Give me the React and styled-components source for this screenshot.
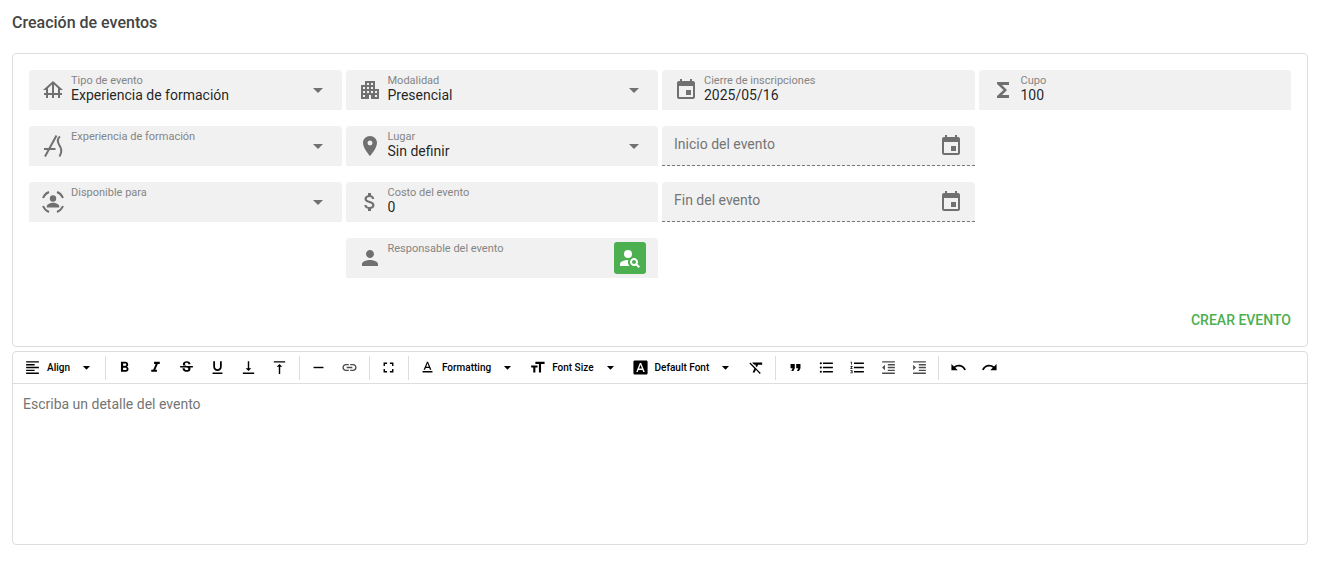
import styled, { createGlobalStyle } from 'styled-components';
import {
	MdApartment,
	MdArrowDropDown,
	MdAttachMoney,
	MdEvent,
	MdFontDownload,
	MdFormatAlignLeft,
	MdFormatBold,
	MdFormatClear,
	MdFormatIndentDecrease,
	MdFormatIndentIncrease,
	MdFormatItalic,
	MdFormatListBulleted,
	MdFormatListNumbered,
	MdFormatQuote,
	MdFormatSize,
	MdFormatUnderlined,
	MdFoundation,
	MdFullscreen,
	MdFunctions,
	MdLink,
	MdPerson,
	MdPersonSearch,
	MdPlace,
	MdRedo,
	MdRemove,
	MdStrikethroughS,
	MdTextFormat,
	MdUndo,
	MdVerticalAlignBottom,
	MdVerticalAlignTop,
} from 'react-icons/md';

const GlobalStyle = createGlobalStyle`
	* {
		box-sizing: border-box;
	}

	body {
		margin: 0;
		background: #fff;
		color: rgba(0, 0, 0, 0.87);
		font-family: Roboto, "Liberation Sans", sans-serif;
	}

	button, input, select, textarea {
		font-family: inherit;
	}
`;

const SlideIcon = () => (
	<svg viewBox="0 0 24 24" width="24" height="24" fill="none" stroke="currentColor" strokeWidth="2">
		<path d="M4 22.500 15.500 1.500M3 15h11.500" />
		<path d="M19 2.500c-2.500 2-3 4.500-1 8 2.500 4 3.500 7 .5 12" />
	</svg>
);

const AudienceIcon = () => (
	<svg viewBox="0 0 24 24" width="24" height="24">
		<path
			d="M8 2A10.800 10.800 0 0 0 2 8M16 2A10.800 10.800 0 0 1 22 8M8 22A10.800 10.800 0 0 1 2 16M16 22a10.800 10.800 0 0 0 6-6"
			fill="none"
			stroke="currentColor"
			strokeWidth="2"
		/>
		<circle cx="12" cy="8.500" r="3.200" fill="currentColor" />
		<path d="M5.800 17.500v-1.200c0-2.400 4-3.600 6.200-3.600s6.200 1.200 6.200 3.600v1.200z" fill="currentColor" />
	</svg>
);

const Page = styled.main`
	padding: 12px 10px 30px 12px;
`;

const Title = styled.h1`
	margin: 0 0 20px;
	color: #444;
	font-size: 16px;
	font-weight: 500;
	line-height: 21px;
`;

const Card = styled.form`
	display: flex;
	flex-direction: column;
	gap: 32px;
	margin-bottom: 4px;
	padding: 16px;
	border: 1px solid #ddd;
	border-radius: 4px;
`;

const Fields = styled.div`
	display: grid;
	grid-template-columns: repeat(4, 1fr);
	gap: 4px;
	align-items: start;
`;

const Column = styled.div`
	display: flex;
	flex-direction: column;
	gap: 16px;
	min-width: 0;
`;

const FieldBox = styled.div`
	display: flex;
	align-items: center;
	height: 40px;
	padding: 0 12px;
	background: #f1f1f1;
	border-bottom: ${({ $dashed }) => ($dashed ? '1px dashed #777' : '0')};
	border-radius: 4px 4px 0 0;
	color: #707070;

	> svg {
		flex: none;
	}
`;

const FieldText = styled.div`
	display: flex;
	flex: 1;
	flex-direction: column;
	min-width: 0;
	height: 30px;
	margin-left: 6px;
`;

const Label = styled.label`
	color: #858585;
	font-size: 11px;
	line-height: 12px;
`;

const Input = styled.input`
	width: 100%;
	min-width: 0;
	height: 16px;
	padding: 0;
	border: 0;
	outline: 0;
	background: transparent;
	color: rgba(0, 0, 0, 0.87);
	font-size: 14px;
	line-height: 16px;

	&::placeholder {
		color: #757575;
		opacity: 1;
	}
`;

const Select = styled(Input).attrs({ as: 'select' })`
	appearance: none;
`;

const DateInput = styled(Input)`
	height: 20px;
	padding-bottom: 4px;
`;

const IconButton = styled.button`
	display: flex;
	padding: 0;
	border: 0;
	background: none;
	color: inherit;
`;

const SearchButton = styled(IconButton)`
	align-items: center;
	justify-content: center;
	width: 32px;
	height: 32px;
	border-radius: 3px;
	background: #4caf50;
	color: #fff;
`;

const Actions = styled.div`
	display: flex;
	justify-content: flex-end;
`;

const SubmitButton = styled.button`
	padding: 0;
	border: 0;
	background: none;
	color: #4caf50;
	font-size: 14px;
	font-weight: 500;
	line-height: 20px;
	text-transform: uppercase;
`;

const Editor = styled.section`
	border: 1px solid #ddd;
	border-radius: 4px;
`;

const Toolbar = styled.div`
	display: flex;
	flex-wrap: wrap;
	align-items: center;
	min-height: 32px;
	padding-left: 1px;
	border-bottom: 1px solid #ddd;
`;

const Group = styled.div`
	display: flex;
	gap: 7px;
	height: 24px;
	padding: 0 7px;
	border-right: ${({ $last }) => ($last ? '0' : '1px solid #ddd')};
`;

const Tool = styled.button`
	display: flex;
	align-items: center;
	justify-content: center;
	gap: 6px;
	min-width: 24px;
	height: 24px;
	padding: ${({ $menu }) => ($menu ? '0 3px' : '0')};
	border: 0;
	background: none;
	color: #000;
	font-size: 10px;
	font-weight: 500;
	opacity: ${({ disabled }) => (disabled ? 0.7 : 1)};
`;

const ToolCaret = styled(MdArrowDropDown)`
	margin-left: 2px;
`;

const Detail = styled.textarea`
	display: block;
	width: 100%;
	height: 160px;
	padding: 10px;
	border: 0;
	outline: 0;
	background: transparent;
	font-size: 14px;
	line-height: 21px;
	resize: none;

	&::placeholder {
		color: #757575;
		opacity: 1;
	}
`;

const Field = ({ id, label, icon: Icon, value = '', children }) => (
	<FieldBox>
		<Icon size={24} />
		<FieldText>
			<Label htmlFor={id}>{label}</Label>
			<Input id={id} defaultValue={value} />
		</FieldText>
		{children}
	</FieldBox>
);

const SelectField = ({ id, label, icon: Icon, value = '' }) => (
	<FieldBox>
		<Icon size={24} />
		<FieldText>
			<Label htmlFor={id}>{label}</Label>
			<Select id={id} defaultValue={value}>
				<option>{value}</option>
			</Select>
		</FieldText>
		<MdArrowDropDown size={24} />
	</FieldBox>
);

const DateField = ({ label }) => (
	<FieldBox $dashed>
		<DateInput aria-label={label} placeholder={label} />
		<IconButton type="button" aria-label={`Elegir ${label}`}>
			<MdEvent size={24} />
		</IconButton>
	</FieldBox>
);

const toolGroups = [
	[{ name: 'Align', icon: MdFormatAlignLeft, menu: true }],
	[
		{ name: 'Bold', icon: MdFormatBold },
		{ name: 'Italic', icon: MdFormatItalic },
		{ name: 'Strike', icon: MdStrikethroughS },
		{ name: 'Underline', icon: MdFormatUnderlined },
		{ name: 'Subscript', icon: MdVerticalAlignBottom },
		{ name: 'Superscript', icon: MdVerticalAlignTop },
	],
	[
		{ name: 'Rule', icon: MdRemove },
		{ name: 'Link', icon: MdLink, disabled: true },
	],
	[{ name: 'Fullscreen', icon: MdFullscreen }],
	[
		{ name: 'Formatting', icon: MdTextFormat, menu: true },
		{ name: 'Font Size', icon: MdFormatSize, menu: true },
		{ name: 'Default Font', icon: MdFontDownload, menu: true },
		{ name: 'Remove format', icon: MdFormatClear },
	],
	[
		{ name: 'Quote', icon: MdFormatQuote },
		{ name: 'Bulleted list', icon: MdFormatListBulleted },
		{ name: 'Numbered list', icon: MdFormatListNumbered },
		{ name: 'Outdent', icon: MdFormatIndentDecrease, disabled: true },
		{ name: 'Indent', icon: MdFormatIndentIncrease, disabled: true },
	],
	[
		{ name: 'Undo', icon: MdUndo },
		{ name: 'Redo', icon: MdRedo },
	],
];

const EditorToolbar = () => (
	<Toolbar role="toolbar">
		{toolGroups.map((tools, index) => (
			<Group key={tools[0].name} $last={index === toolGroups.length - 1}>
				{tools.map(({ name, icon: Icon, menu, disabled }) => (
					<Tool key={name} type="button" aria-label={name} $menu={menu} disabled={disabled}>
						<Icon size={17} />
						{menu && name}
						{menu && <ToolCaret size={17} />}
					</Tool>
				))}
			</Group>
		))}
	</Toolbar>
);

const App = () => {
	return (
		<Page>
			<GlobalStyle />
			<Title>Creación de eventos</Title>
			<Card onSubmit={(event) => event.preventDefault()}>
				<Fields>
					<Column>
						<SelectField id="type" label="Tipo de evento" icon={MdFoundation} value="Experiencia de formación" />
						<SelectField id="experience" label="Experiencia de formación" icon={SlideIcon} />
						<SelectField id="audience" label="Disponible para" icon={AudienceIcon} />
					</Column>
					<Column>
						<SelectField id="mode" label="Modalidad" icon={MdApartment} value="Presencial" />
						<SelectField id="place" label="Lugar" icon={MdPlace} value="Sin definir" />
						<Field id="cost" label="Costo del evento" icon={MdAttachMoney} value="0" />
						<Field id="owner" label="Responsable del evento" icon={MdPerson}>
							<SearchButton type="button" aria-label="Buscar responsable">
								<MdPersonSearch size={24} />
							</SearchButton>
						</Field>
					</Column>
					<Column>
						<Field id="deadline" label="Cierre de inscripciones" icon={MdEvent} value="2025/05/16" />
						<DateField label="Inicio del evento" />
						<DateField label="Fin del evento" />
					</Column>
					<Column>
						<Field id="quota" label="Cupo" icon={MdFunctions} value="100" />
					</Column>
				</Fields>
				<Actions>
					<SubmitButton type="submit">Crear evento</SubmitButton>
				</Actions>
			</Card>
			<Editor>
				<EditorToolbar />
				<Detail aria-label="Detalle del evento" placeholder="Escriba un detalle del evento" />
			</Editor>
		</Page>
	);
};

export default App;
